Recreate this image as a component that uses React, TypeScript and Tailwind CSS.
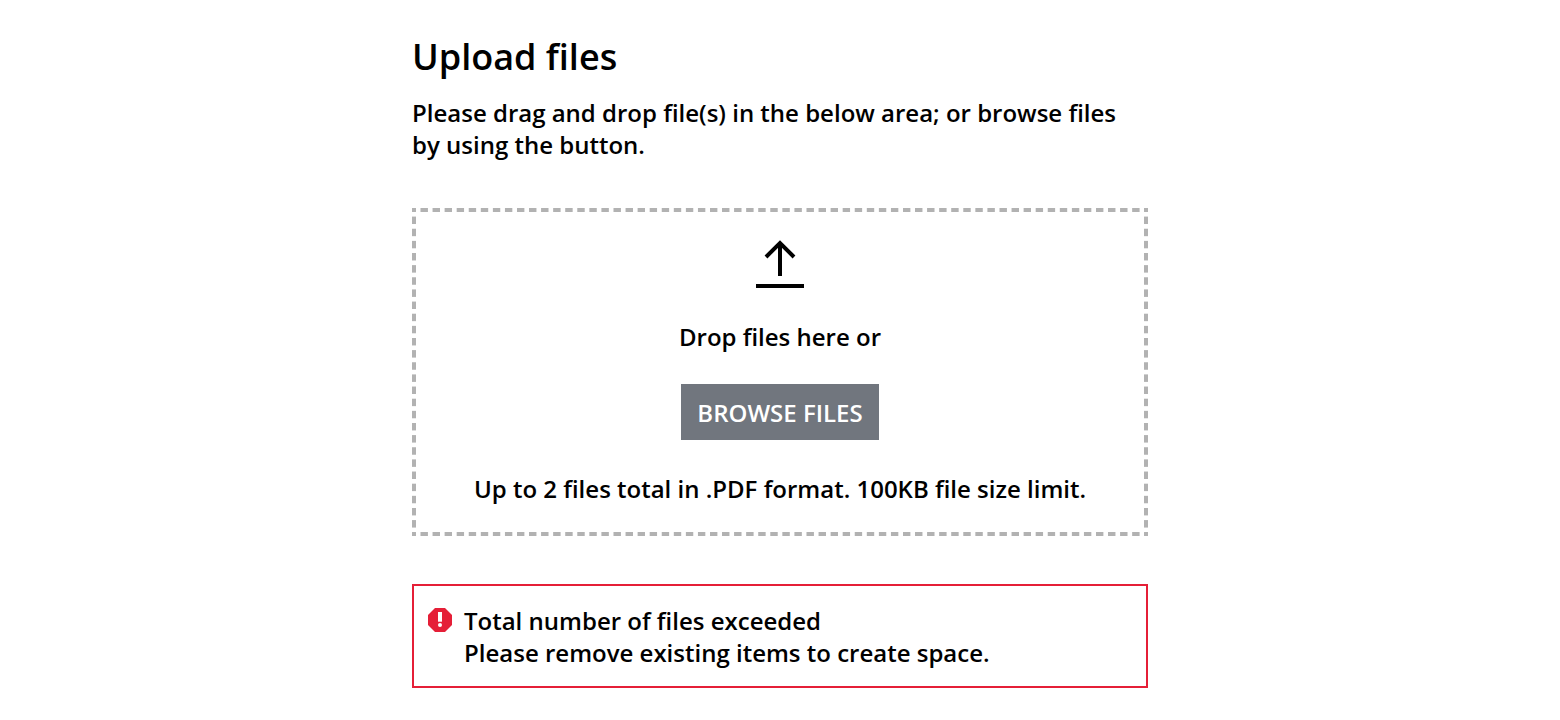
export default function App() {
  return (
    <main className="px-6 pt-[33px] pb-8 font-['Open_Sans','Noto_Sans',sans-serif] text-2xl/8 font-semibold text-black antialiased">
      <div className="mx-auto max-w-[736px]">
        <h1 className="text-4xl/[48px]">Upload files</h1>
        <p className="mt-4">
          Please drag and drop file(s) in the below area; or browse files by using the button.
        </p>

        <section
          aria-label="File drop area"
          className="mt-[47px] flex flex-col items-center px-7 pt-8 pb-[31px] [--h:linear-gradient(to_right,#b2b2b2_33.33%,transparent_33.33%_66.67%,#b2b2b2_66.67%)] [--v:linear-gradient(to_bottom,#b2b2b2_33.33%,transparent_33.33%_66.67%,#b2b2b2_66.67%)] [background:var(--h)_top/12px_4px_round_no-repeat,var(--h)_bottom/12px_4px_round_no-repeat,var(--v)_left/4px_12px_no-repeat_round,var(--v)_right/4px_12px_no-repeat_round]"
        >
          <svg aria-hidden="true" className="size-12" viewBox="0 0 48 48" fill="none" stroke="currentColor" strokeWidth="4">
            <path d="M24 36V3M10 17 24 3l14 14M0 46h48" />
          </svg>
          <p className="mt-[33px]">Drop files here or</p>
          <button type="button" className="mt-[31px] h-14 bg-[#71767e] px-4 pt-[2px] text-white">
            BROWSE FILES
          </button>
          <p className="mt-[33px]">Up to 2 files total in .PDF format. 100KB file size limit.</p>
        </section>

        <div role="alert" className="mt-12 flex gap-3 border-2 border-[#e51f37] px-[14px] pt-[19px] pb-[17px]">
          <svg aria-hidden="true" className="mt-[3px] size-6 shrink-0" viewBox="0 0 24 24">
            <path fill="#e51f37" d="M7 0h10l7 7v10l-7 7H7l-7-7V7z" />
            <path fill="white" d="M10 4h4v9.7h-4z" />
            <circle fill="white" cx="12" cy="17" r="2" />
          </svg>
          <div>
            <p>Total number of files exceeded</p>
            <p>Please remove existing items to create space.</p>
          </div>
        </div>
      </div>
    </main>
  );
}
